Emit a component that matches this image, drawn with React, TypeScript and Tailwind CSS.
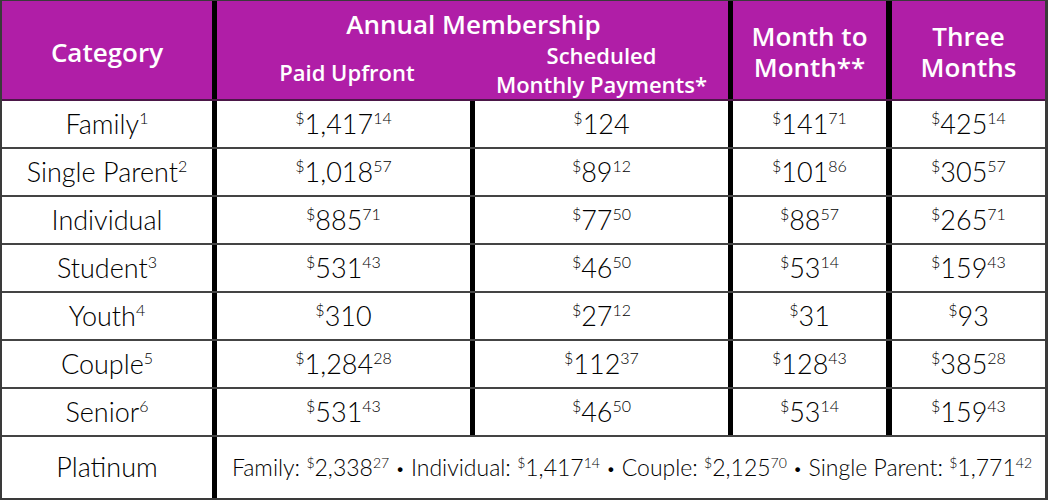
import React from "react";

type P = { d: string; c?: string };

const Sup = ({ children, small }: { children: React.ReactNode; small?: boolean }) => (
  <span className={`${small ? "text-[14px] -top-[8px]" : "text-[16px] -top-[10px]"} relative leading-none`}>{children}</span>
);

const Price = ({ d, c, small }: P & { small?: boolean }) => (
  <span className="whitespace-nowrap">
    <Sup small={small}>$</Sup>
    {d}
    {c ? <Sup small={small}>{c}</Sup> : null}
  </span>
);

const rows: { name: string; n?: string; v: P[] }[] = [
  { name: "Family", n: "1", v: [{ d: "1,417", c: "14" }, { d: "124" }, { d: "141", c: "71" }, { d: "425", c: "14" }] },
  { name: "Single Parent", n: "2", v: [{ d: "1,018", c: "57" }, { d: "89", c: "12" }, { d: "101", c: "86" }, { d: "305", c: "57" }] },
  { name: "Individual", v: [{ d: "885", c: "71" }, { d: "77", c: "50" }, { d: "88", c: "57" }, { d: "265", c: "71" }] },
  { name: "Student", n: "3", v: [{ d: "531", c: "43" }, { d: "46", c: "50" }, { d: "53", c: "14" }, { d: "159", c: "43" }] },
  { name: "Youth", n: "4", v: [{ d: "310" }, { d: "27", c: "12" }, { d: "31" }, { d: "93" }] },
  { name: "Couple", n: "5", v: [{ d: "1,284", c: "28" }, { d: "112", c: "37" }, { d: "128", c: "43" }, { d: "385", c: "28" }] },
  { name: "Senior", n: "6", v: [{ d: "531", c: "43" }, { d: "46", c: "50" }, { d: "53", c: "14" }, { d: "159", c: "43" }] },
];

const head = { fontFamily: '"Open Sans", "Noto Sans", sans-serif' };
const body = { fontFamily: 'Lato, "Open Sans", sans-serif' };

export default function App() {
  return (
    <div className="w-[1048px] h-[500px] bg-white overflow-hidden" style={body}>
      <div className="w-[1048px] h-[500px] border-t border-l-2 border-r-[3px] border-b-2 border-[#3a3a3a] flex flex-col text-black font-light">
        {/* header */}
        <div className="flex h-[100px] bg-[#b01ea7] border-b-2 border-[#4b1747] text-white font-semibold shrink-0" style={head}>
          <div className="w-[215px] shrink-0 border-r-[5px] border-black flex items-center justify-center text-[26px] pt-[4px]">
            Category
          </div>
          <div className="w-[516px] shrink-0 border-r-[5px] border-black flex flex-col">
            <div className="text-[26px] text-center pt-[7px] leading-[32px] pl-[2px]">Annual Membership</div>
            <div className="flex flex-1">
              <div className="w-[258px] flex items-center justify-center text-[22px] leading-[28px] pt-[4px] pl-[2px]">Paid Upfront</div>
              <div className="w-[253px] flex flex-col items-center justify-start text-[22px] leading-[29px] mt-[1px]">
                <span>Scheduled</span>
                <span>Monthly Payments*</span>
              </div>
            </div>
          </div>
          <div className="w-[159px] shrink-0 border-r-[6px] border-black flex flex-col items-center justify-center text-[26px] leading-[31px] pt-[4px]">
            <span>Month to</span>
            <span>Month**</span>
          </div>
          <div className="flex-1 flex flex-col items-center justify-center text-[26px] leading-[31px] pt-[4px]">
            <span>Three</span>
            <span>Months</span>
          </div>
        </div>
        {rows.map((r) => (
          <div key={r.name} className="flex h-[48px] border-b-2 border-[#444] text-[27px] shrink-0">
            <div className="w-[215px] shrink-0 border-r-[5px] border-black flex items-center justify-center">
              <span>
                {r.name}
                {r.n ? <Sup>{r.n}</Sup> : null}
              </span>
            </div>
            <div className="w-[258px] shrink-0 border-r-[5px] border-black flex items-center justify-center">
              <Price {...r.v[0]} />
            </div>
            <div className="w-[258px] shrink-0 border-r-[5px] border-black flex items-center justify-center">
              <Price {...r.v[1]} />
            </div>
            <div className="w-[159px] shrink-0 border-r-[6px] border-black flex items-center justify-center">
              <Price {...r.v[2]} />
            </div>
            <div className="flex-1 flex items-center justify-center">
              <Price {...r.v[3]} />
            </div>
          </div>
        ))}
        <div className="flex flex-1">
          <div className="w-[215px] shrink-0 border-r-[5px] border-black flex items-center justify-center text-[27px]">
            Platinum
          </div>
          <div className="flex-1 min-w-0 flex items-center justify-center text-[23px] whitespace-nowrap pl-[2px]">
            <span>
              Family: <Price d="2,338" c="27" small /> <span className="text-[16px] relative -top-[2px]">•</span> Individual:{" "}
              <Price d="1,417" c="14" small /> <span className="text-[16px] relative -top-[2px]">•</span> Couple:{" "}
              <Price d="2,125" c="70" small /> <span className="text-[16px] relative -top-[2px]">•</span> Single Parent:{" "}
              <Price d="1,771" c="42" small />
            </span>
          </div>
        </div>
      </div>
    </div>
  );
}
